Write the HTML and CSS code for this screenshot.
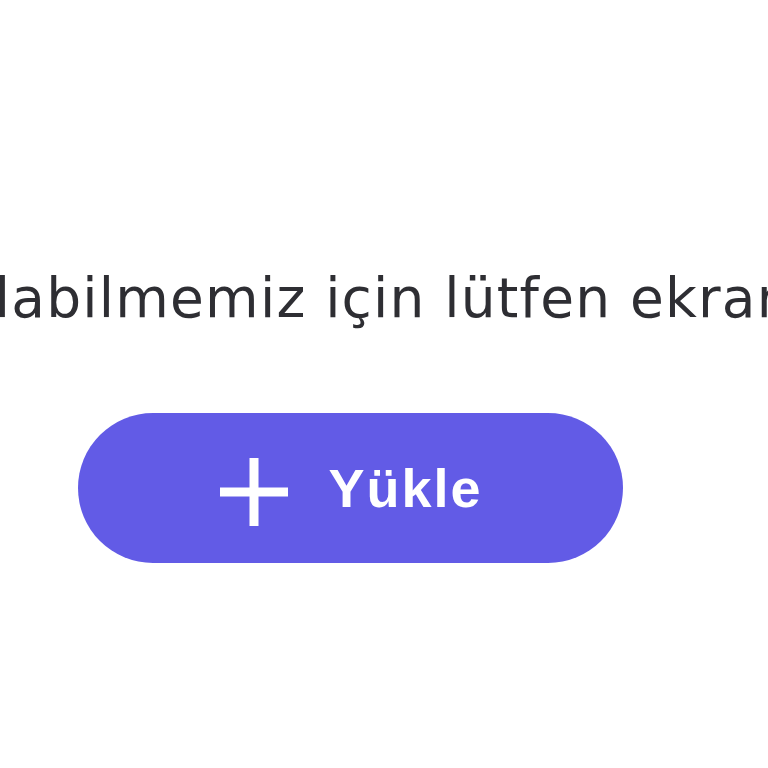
FILE: index.html
```html
<!DOCTYPE HTML>
<html>
<head>
<meta charset="utf-8" />
<title>Yükle</title>
<link rel="stylesheet" href="styles.css">
</head>
<body>
	<main class="upload">
		<p class="hint">olabilmemiz için lütfen ekran görüntüsü yükleyin</p>
		<button class="btn-upload" type="button">
			<svg class="plus" width="72" height="72" viewBox="0 0 72 72">
				<path d="M36 2v68M2 36h68" stroke="#fff" stroke-width="9" fill="none"/>
			</svg>
			<span>Yükle</span>
		</button>
	</main>
</body>
</html>
```

FILE: styles.css
```css
html,body{margin:0;padding:0;background:#fff;overflow:hidden;}
body{width:768px;height:768px;}
.upload{padding-top:266px;}
.hint{
	margin:0 0 83px -40px;
	white-space:nowrap;
	font-family:"DejaVu Sans",sans-serif;
	font-size:55px;
	line-height:64px;
	letter-spacing:1.2px;
	color:#2e2e33;
}
.btn-upload{
	display:flex;
	align-items:center;
	justify-content:center;
	gap:38px;
	margin-left:78px;
	width:545px;
	height:150px;
	border:0;
	border-radius:75px;
	background:#625be6;
	color:#fff;
	font-family:"Liberation Sans",Arial,sans-serif;
	font-weight:bold;
	font-size:54px;
	letter-spacing:2px;
	padding:0;
	cursor:pointer;
}
.plus{margin-top:8px;}
.btn-upload span{line-height:1;}
```
